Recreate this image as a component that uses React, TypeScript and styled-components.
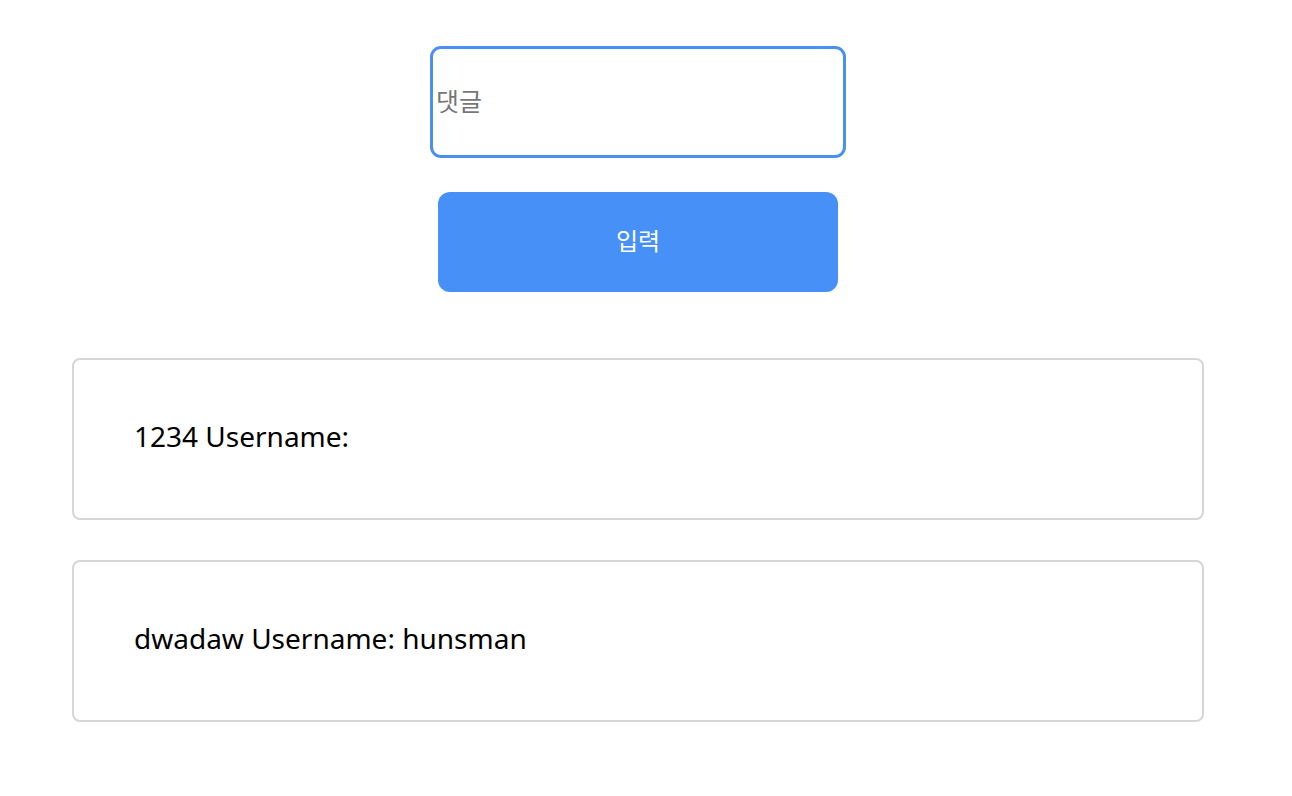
import React from "react";
import styled, { createGlobalStyle } from "styled-components";

const GlobalStyle = createGlobalStyle`
  html, body { margin: 0; padding: 0; background: #ffffff; }
  body { font-family: "Noto Sans", "Noto Sans CJK KR", sans-serif; }
`;

const Page = styled.div`
  width: 1276px;
  display: flex;
  flex-direction: column;
  align-items: center;
  padding-top: 46px;
`;

const Form = styled.form`
  display: flex;
  flex-direction: column;
  align-items: center;
  gap: 34px;
`;

const CommentInput = styled.input`
  box-sizing: border-box;
  width: 416px;
  height: 112px;
  border: 3px solid #4a8ff2;
  border-radius: 11px;
  padding: 0 0 5px 3px;
  font-family: "Noto Sans CJK KR", sans-serif;
  font-size: 25px;
  color: #222;
  outline: none;
  &::placeholder { color: #777777; }
`;

const SubmitButton = styled.button`
  width: 400px;
  height: 100px;
  border: none;
  border-radius: 12px;
  padding: 0 0 6px;
  background: #4790f7;
  color: #ffffff;
  font-family: "Noto Sans CJK KR", sans-serif;
  font-size: 24px;
  cursor: pointer;
`;

const List = styled.div`
  align-self: stretch;
  margin: 66px 72px 0;
  display: flex;
  flex-direction: column;
  gap: 40px;
`;

const Card = styled.div`
  box-sizing: border-box;
  height: 162px;
  border: 2px solid #d6d6d6;
  border-radius: 8px;
  padding: 0 60px 6px;
  display: flex;
  align-items: center;
  font-family: "Noto Sans", "Noto Sans CJK KR", sans-serif;
  font-size: 28px;
  color: #000;
`;

const comments = [
  { text: "1234", user: "" },
  { text: "dwadaw", user: "hunsman" },
];

export default function App() {
  return (
    <>
      <GlobalStyle />
      <Page>
        <Form onSubmit={(e) => e.preventDefault()}>
          <CommentInput placeholder="댓글" />
          <SubmitButton type="submit">입력</SubmitButton>
        </Form>
        <List>
          {comments.map((c, i) => (
            <Card key={i}>
              {c.text} Username: {c.user}
            </Card>
          ))}
        </List>
      </Page>
    </>
  );
}
